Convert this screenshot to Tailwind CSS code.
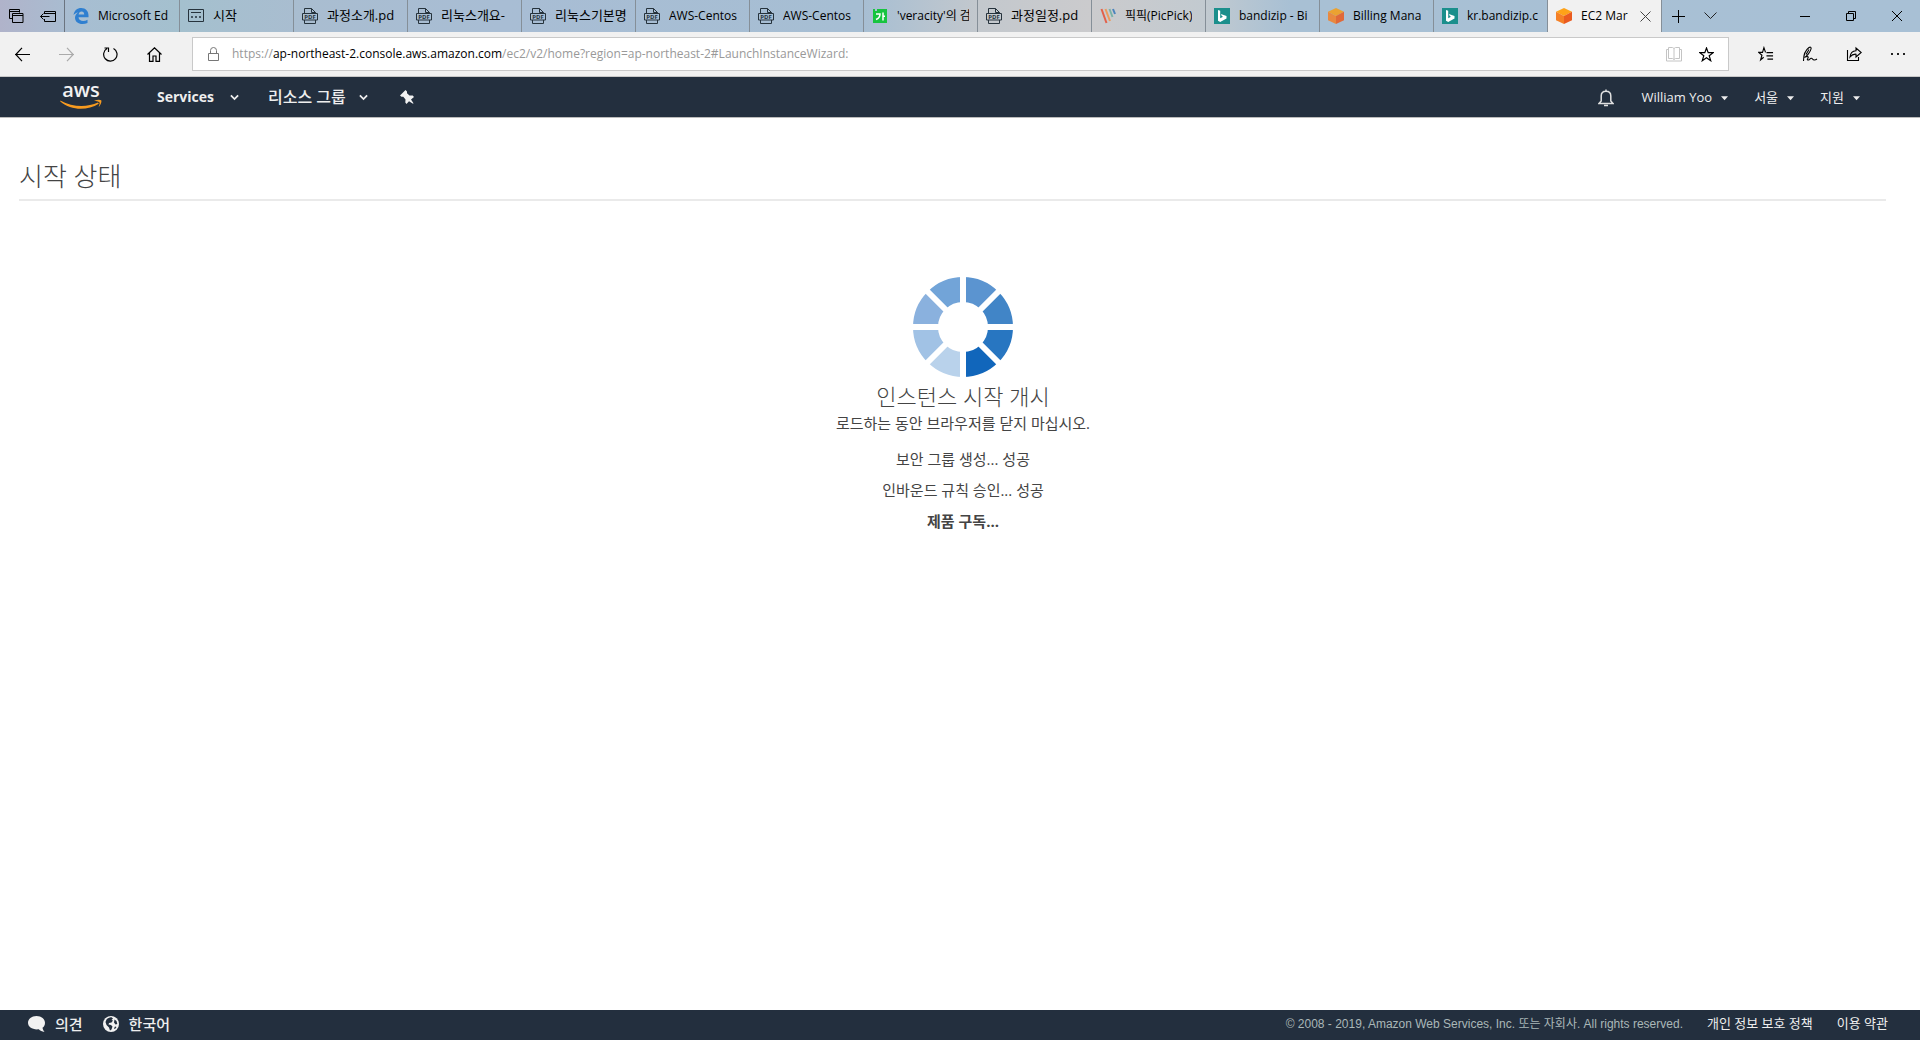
<!DOCTYPE html>
<html lang="ko">
<head>
<meta charset="utf-8">
<title>EC2 Management Console</title>
<script src="https://cdn.jsdelivr.net/npm/@tailwindcss/browser@4"></script>
</head>
<body class="min-h-screen flex flex-col bg-white text-[#444] font-['Open_Sans','Noto_Sans_CJK_KR',sans-serif]">
<svg class="hidden" aria-hidden="true">
  <symbol id="pdf" viewBox="0 0 16 16"><path fill="none" stroke="currentColor" d="M2.500 5V.5h7l4 4V5M9.500.5v4h4M2.500 12v3.500h11V12M.5 5.500h15v6.500H.5z"/><text x="8" y="11" text-anchor="middle" font-size="6" font-weight="700" fill="currentColor">PDF</text></symbol>
  <symbol id="bing" viewBox="0 0 16 16"><path fill="#1b8f8c" d="M0 0h16v16H0z"/><path fill="#fff" d="M4 2l2.200.8v7.400L9 8.700 7.800 8l-.9-2.100L12.500 8v2.500L6.200 14 4 12.800z"/></symbol>
  <symbol id="cube" viewBox="0 0 16 16"><path fill="#f90" fill-opacity=".9" d="M8 0l8 3.800L8 8 0 3.800z"/><path fill="#f58026" d="M0 3.800L8 8v8L0 12.200z"/><path fill="#ea5b1f" d="M16 3.800L8 8v8l8-3.800z"/></symbol>
  <symbol id="caret" viewBox="0 0 8 5"><path fill="currentColor" d="M0 0h8L4 4.500z"/></symbol>
  <symbol id="chev" viewBox="0 0 10 7"><path fill="none" stroke="currentColor" stroke-width="2" d="M1 1.200l4 4 4-4"/></symbol>
</svg>

<header class="text-black">
  <div class="flex h-8 text-[13px] bg-[linear-gradient(90deg,#b0b3ca_0px,#a7bed2_80px,#a4c0ce_180px,#a9bdd0_300px,#a8bdd4_500px,#a6bed3_860px,#c3c8cd_980px,#cbcbcd_1090px,#c2cad0_1205px,#a8c0d4_1290px,#a8c0d5_1920px)]">
    <div class="flex w-[65px] shrink-0 items-center gap-4 pl-[9px] border-r border-[#6b7480]">
      <button aria-label="Tabs set aside"><svg class="size-[15px]" viewBox="0 0 15 15" fill="none" stroke="currentColor"><path d="M3.500 9.500h-3v-9h10v3M.5 2.500h10M3.500 4.500h10.500v9H3.500zM3.500 6.500h10.500"/></svg></button>
      <button aria-label="Set tabs aside"><svg class="w-4 h-[13px]" viewBox="0 0 16 13" fill="none" stroke="currentColor"><path d="M4.500 4V1.500h11v10h-11V9M4.500 3.500h11M.5 6.500h9M3.500 3.500l-3 3 3 3"/></svg></button>
    </div>
    <nav class="flex min-w-0" aria-label="Tabs">
      <a href="#" class="flex w-[115px] items-center gap-[9px] pl-2 pr-2 border-r border-[#858f98] text-xs"><svg class="size-4 shrink-0" viewBox="0 0 16 16"><path fill="#2f7fd0" d="M.5 7C1.200 2.500 4.300 0 8.200 0 12.800 0 15.500 3.300 15.500 7.500V9.300H5.500c.2 2.600 2.300 3.700 4.600 3.700 1.700 0 3.100-.4 4.400-1.200v3.200c-1.500.7-3.200 1-5.100 1C5.200 16 2 13.500 2 9.700c0-2.300 1.200-4.200 3.100-5.300C3.200 4.700 1.500 5.600.5 7zM5.600 6.400h5.600c0-1.800-1-2.900-2.600-2.900S5.900 4.600 5.600 6.400z"/></svg><span class="overflow-hidden whitespace-nowrap">Microsoft Ed</span></a>
      <a href="#" class="flex w-[114px] items-center gap-[9px] pl-2 pr-2 border-r border-[#858f98]"><svg class="size-4 shrink-0" viewBox="0 0 16 16" fill="none" stroke="#26333c"><path d="M.5 1.500h15v12H.5zM3 4.500h10M3.500 8.500h1v1h-1zM7.500 8.500h1v1h-1zM11.500 8.500h1v1h-1z"/></svg><span class="overflow-hidden whitespace-nowrap">시작</span></a>
      <a href="#" class="flex w-[114px] items-center gap-[9px] pl-2 pr-2 border-r border-[#858f98]"><svg class="size-4 shrink-0 text-[#26333c]"><use href="#pdf"/></svg><span class="overflow-hidden whitespace-nowrap">과정소개.pd</span></a>
      <a href="#" class="flex w-[114px] items-center gap-[9px] pl-2 pr-2 border-r border-[#858f98]"><svg class="size-4 shrink-0 text-[#26333c]"><use href="#pdf"/></svg><span class="overflow-hidden whitespace-nowrap">리눅스개요-</span></a>
      <a href="#" class="flex w-[114px] items-center gap-[9px] pl-2 pr-2 border-r border-[#858f98]"><svg class="size-4 shrink-0 text-[#26333c]"><use href="#pdf"/></svg><span class="overflow-hidden whitespace-nowrap">리눅스기본명</span></a>
      <a href="#" class="flex w-[114px] items-center gap-[9px] pl-2 pr-2 border-r border-[#858f98] text-xs"><svg class="size-4 shrink-0 text-[#26333c]"><use href="#pdf"/></svg><span class="overflow-hidden whitespace-nowrap">AWS-Centos</span></a>
      <a href="#" class="flex w-[114px] items-center gap-[9px] pl-2 pr-2 border-r border-[#858f98] text-xs"><svg class="size-4 shrink-0 text-[#26333c]"><use href="#pdf"/></svg><span class="overflow-hidden whitespace-nowrap">AWS-Centos</span></a>
      <a href="#" class="flex w-[114px] items-center gap-[9px] pl-2 pr-2 border-r border-[#858f98] text-xs"><svg class="size-4 shrink-0" viewBox="0 0 16 16"><path fill="#17c43f" d="M1 1h2v2h2V1h10v14H1z"/><path fill="none" stroke="#fff" stroke-width="1.500" d="M4 6h4c0 3-1.500 4.500-4 5.500M11 4.500v8M11 8.300h2"/></svg><span class="overflow-hidden whitespace-nowrap">'veracity'의 검</span></a>
      <a href="#" class="flex w-[114px] items-center gap-[9px] pl-2 pr-2 border-r border-[#858f98]"><svg class="size-4 shrink-0 text-[#26333c]"><use href="#pdf"/></svg><span class="overflow-hidden whitespace-nowrap">과정일정.pd</span></a>
      <a href="#" class="flex w-[114px] items-center gap-[9px] pl-2 pr-2 border-r border-[#858f98] text-xs"><svg class="size-4 shrink-0" viewBox="0 0 16 16" fill="none" stroke-width="2"><path stroke="#e2604a" d="M1.500 1l5 14"/><path stroke="#ec9a5c" d="M5.500 1l4.500 12"/><path stroke="#79b3a8" d="M9.500 1l3 8"/><path stroke="#4b83bd" d="M13 1l2 5"/></svg><span class="overflow-hidden whitespace-nowrap">픽픽(PicPick)</span></a>
      <a href="#" class="flex w-[114px] items-center gap-[9px] pl-2 pr-2 border-r border-[#858f98] text-xs"><svg class="size-4 shrink-0"><use href="#bing"/></svg><span class="overflow-hidden whitespace-nowrap">bandizip - Bi</span></a>
      <a href="#" class="flex w-[114px] items-center gap-[9px] pl-2 pr-2 border-r border-[#858f98] text-xs"><svg class="size-4 shrink-0 opacity-85"><use href="#cube"/></svg><span class="overflow-hidden whitespace-nowrap">Billing Mana</span></a>
      <a href="#" class="flex w-[114px] items-center gap-[9px] pl-2 pr-2 border-r border-[#858f98] text-xs"><svg class="size-4 shrink-0"><use href="#bing"/></svg><span class="overflow-hidden whitespace-nowrap">kr.bandizip.c</span></a>
      <div class="flex w-[114px] items-center justify-between pl-2 pr-2.5 border-r border-[#858f98] bg-[#f1f1f1] text-xs"><a href="#" class="flex min-w-0 items-center gap-[9px]"><svg class="size-4 shrink-0"><use href="#cube"/></svg><span class="overflow-hidden whitespace-nowrap">EC2 Mar</span></a><button class="shrink-0" aria-label="Close tab"><svg class="size-[11px]" viewBox="0 0 11 11" stroke="#444"><path d="M.5.5l10 10M10.500.5l-10 10"/></svg></button></div>
    </nav>
    <div class="flex items-center gap-[19px] pl-2.5">
      <button aria-label="New tab"><svg class="size-[13px]" viewBox="0 0 13 13" stroke="#000"><path d="M6.500 0v13M0 6.500h13"/></svg></button>
      <button aria-label="Tab previews"><svg class="w-[13px] h-2" viewBox="0 0 13 8" fill="none" stroke="#222"><path d="M.5.500l6 6 6-6"/></svg></button>
    </div>
    <div class="ml-auto flex items-center gap-9 pr-[18px]">
      <button aria-label="Minimize"><svg class="size-2.5" viewBox="0 0 10 10" stroke="#000"><path d="M0 5.500h10"/></svg></button>
      <button aria-label="Restore"><svg class="size-2.5" viewBox="0 0 10 10" fill="none" stroke="#000"><path d="M.5 2.500h7v7h-7zM2.500 2.500v-2h7v7h-2"/></svg></button>
      <button aria-label="Close"><svg class="size-2.5" viewBox="0 0 10 10" stroke="#000"><path d="M0 0l10 10M10 0L0 10"/></svg></button>
    </div>
  </div>

  <div class="flex h-[45px] items-center bg-[#f1f1f1] border-b border-[#c8c8c8]">
    <div class="flex w-48 shrink-0 items-center gap-[29px] pl-[15px]">
      <button aria-label="Back"><svg class="size-[15px]" viewBox="0 0 15 15" fill="none" stroke="#000" stroke-width="1.200"><path d="M0 7.500h15M7 .8L.8 7.500 7 14.200"/></svg></button>
      <button aria-label="Forward" disabled><svg class="size-[15px]" viewBox="0 0 15 15" fill="none" stroke="#aaa" stroke-width="1.200"><path d="M0 7.500h15M8 .8l6.200 6.700L8 14.200"/></svg></button>
      <button aria-label="Refresh"><svg class="size-[15px]" viewBox="0 0 15 15" fill="none" stroke="#000" stroke-width="1.200"><path d="M10.500 1.500A6.700 6.700 0 1 1 4 1.600M1.500 1h4v4"/></svg></button>
      <button aria-label="Home"><svg class="size-[15px]" viewBox="0 0 15 15" fill="none" stroke="#000" stroke-width="1.200"><path d="M.5 7.500l7-6.700 7 6.700M2.500 5.800v8.600h3.500V9h3v5.400h3.500V5.800"/></svg></button>
    </div>
    <div class="flex h-[34px] flex-1 items-center bg-white border border-[#c9c9c9] pl-[15px] pr-3.5">
      <svg class="w-[11px] h-[14px] shrink-0" viewBox="0 0 11 14" fill="none" stroke="#777"><path d="M.5 6.500h10v7H.5zM2.500 6.500V3.500a3 3 0 0 1 6 0v3"/></svg>
      <a href="#" class="ml-[13px] flex-1 text-xs text-[#999] whitespace-nowrap">https://<span class="text-black">ap-northeast-2.console.aws.amazon.com</span>/ec2/v2/home?region=ap-northeast-2#LaunchInstanceWizard:</a>
      <button aria-label="Reading view" disabled><svg class="w-4 h-[15px]" viewBox="0 0 16 15" fill="none" stroke="#c4c4c4"><path d="M2.500.5h4L8 1.500 9.500.5h4v11h-4L8 12.500l-1.500-1h-4zM8 1.500v11M2.500 2.500h-2v11.500h15V2.500h-2"/></svg></button>
      <button class="ml-[17px]" aria-label="Add to favorites"><svg class="size-[15px]" viewBox="0 0 15 15" fill="none" stroke="#000" stroke-width="1.200"><path d="M7.500 1l1.700 4.700h5l-4 3 1.500 5-4.200-3-4.200 3 1.500-5-4-3h5z"/></svg></button>
    </div>
    <div class="flex items-center gap-7 pl-[29px] pr-3.5">
      <button aria-label="Hub"><svg class="w-4 h-4" viewBox="0 0 17 16" fill="none" stroke="#000" stroke-width="1.200"><path d="M9 6.500h7M9 10h7M10 13.500h6M8 6.300L6.300 1.300 4.800 6.300H.8l3.400 3-1.400 5L6 11.500"/></svg></button>
      <button aria-label="Make a Web Note"><svg class="w-4 h-4" viewBox="0 0 16 16" fill="none" stroke="#000" stroke-width="1.100"><path d="M1.500 15C1.500 10 3.500 4 7 1.500c1.500-1 2.500 0 2 1.500C8.300 6 5 10 2.500 11.500M4 8.500l3-5M4.500 11C6 10 7 11 5.500 13c-.5 1 .5 1.500 2 .5 1-1 2-2 3-.5.800 1.200 2.500 1.500 4.500 0"/></svg></button>
      <button aria-label="Share"><svg class="w-4 h-4" viewBox="0 0 16 16" fill="none" stroke="#000" stroke-width="1.100"><path d="M1.500 4v10.500h11V11M4 11c.5-4.500 3-6 6-6.200V2l5.200 4.500L10 11V8.200C7.500 8 5.500 9 4 11z"/></svg></button>
      <button aria-label="Settings and more"><svg class="w-4 h-4" viewBox="0 0 16 16" fill="#222"><path d="M1 7h2v2H1zM7 7h2v2H7zM13 7h2v2h-2z"/></svg></button>
    </div>
  </div>

  <nav class="flex h-[41px] items-center bg-[#232f3e] border-b border-[#bbb] text-[#eee]" aria-label="AWS">
    <a href="#" class="ml-[60px]" aria-label="AWS"><svg class="w-[42px] h-[26px]" viewBox="0 0 42 26"><text x="21" y="13" text-anchor="middle" font-size="20" font-weight="600" fill="#f2f2f2">aws</text><path fill="#f79b20" d="M.3 16.500C13 23.500 27 23.500 38 18.500l.8 1.200C27 27 11 26.500.3 17.500zM34 16.800c3-1.300 6-1.500 7.200-.6.800 1.500-.6 5.300-2.700 7 .8-2 1.500-4 .9-5-.8-.8-3.400-.9-5.400-1.400z"/></svg></a>
    <button class="ml-[55px] flex items-center gap-4 text-sm font-bold">Services<svg class="w-[9px] h-[7px]"><use href="#chev"/></svg></button>
    <button class="ml-[29px] flex items-center gap-[13px] text-base font-medium">리소스 그룹<svg class="w-[9px] h-[7px]"><use href="#chev"/></svg></button>
    <button class="ml-8" aria-label="Pin shortcuts"><svg class="size-3.5" viewBox="0 0 14 14" fill="#f2f2f2"><path d="M1 4.500L5.500 0 7 1.500v1.800l2.500 2.200h3.200L14 7l-3 2.500 2.500 3.700-.5.500L9 11.300 6.500 14 5.300 12.500l.2-3L3.300 6.800H1.500L0 5.500z"/></svg></button>
    <div class="ml-auto mr-[60px] flex items-center pt-0.5 text-[13px]">
      <button aria-label="Notifications"><svg class="w-4 h-[18px]" viewBox="0 0 16 18" fill="none" stroke="#e0e0e0" stroke-width="1.500"><path d="M8 .5V2M1 14.500h14L12.800 12V7C12.800 4 10.800 2.200 8 2.200S3.200 4 3.200 7v5zM6 16.500h4"/></svg></button>
      <button class="ml-[27px] flex items-center gap-[9px]">William Yoo<svg class="w-[7px] h-[5px]"><use href="#caret"/></svg></button>
      <button class="ml-[26px] flex items-center gap-[9px]">서울<svg class="w-[7px] h-[5px]"><use href="#caret"/></svg></button>
      <button class="ml-[26px] flex items-center gap-[9px]">지원<svg class="w-[7px] h-[5px]"><use href="#caret"/></svg></button>
    </div>
  </nav>
</header>

<main class="flex-1">
  <h1 class="ml-[19px] mr-[34px] mt-10 h-[43px] border-b-2 border-[#eaeaea] text-[26px] leading-9 font-light">시작 상태</h1>
  <section class="flex flex-col items-center pt-[76px] pl-1.5 text-[15px] leading-5" aria-live="polite">
    <svg class="size-[100px]" viewBox="-50 -50 100 100" role="img" aria-label="Loading">
      <circle r="37.500" fill="none" stroke-width="25" stroke="#5b94d0" pathLength="8" stroke-dasharray="1 7" transform="rotate(-90)"/>
      <circle r="37.500" fill="none" stroke-width="25" stroke="#4185c7" pathLength="8" stroke-dasharray="1 7" transform="rotate(-45)"/>
      <circle r="37.500" fill="none" stroke-width="25" stroke="#2876c1" pathLength="8" stroke-dasharray="1 7"/>
      <circle r="37.500" fill="none" stroke-width="25" stroke="#1166bb" pathLength="8" stroke-dasharray="1 7" transform="rotate(45)"/>
      <circle r="37.500" fill="none" stroke-width="25" stroke="#b9d2eb" pathLength="8" stroke-dasharray="1 7" transform="rotate(90)"/>
      <circle r="37.500" fill="none" stroke-width="25" stroke="#a1c2e5" pathLength="8" stroke-dasharray="1 7" transform="rotate(135)"/>
      <circle r="37.500" fill="none" stroke-width="25" stroke="#8ab1de" pathLength="8" stroke-dasharray="1 7" transform="rotate(180)"/>
      <circle r="37.500" fill="none" stroke-width="25" stroke="#72a4d8" pathLength="8" stroke-dasharray="1 7" transform="rotate(225)"/>
      <path stroke="#fff" stroke-width="6" d="M0-51V51M-51 0H51M-37-37L37 37M37-37L-37 37"/>
    </svg>
    <h2 class="mt-1 mb-0.5 text-[22px] leading-[30px] font-light">인스턴스 시작 개시</h2>
    <p>로드하는 동안 브라우저를 닫지 마십시오.</p>
    <p class="mt-4">보안 그룹 생성... 성공</p>
    <p class="mt-[11px]">인바운드 규칙 승인... 성공</p>
    <p class="mt-[11px] font-bold">제품 구독...</p>
  </section>
</main>

<footer class="flex h-[30px] items-center bg-[#232f3e] pb-0.5 pl-7 pr-8 text-[#eee]">
  <a href="#" class="flex items-center gap-2.5 text-[15px] font-medium"><svg class="w-[17px] h-4" viewBox="0 0 17 16" fill="#f2f2f2"><path d="M8.500 0C13.500 0 17 3 17 6.800c0 2.500-1 4-2.500 5 .2 1.500 1 3 2 4.200-2.500-.3-4.500-1.300-5.700-2.700C4.500 14 0 11 0 6.800 0 3 3.500 0 8.500 0z"/></svg>의견</a>
  <button class="ml-5 flex items-center gap-2.5 text-[15px] font-medium"><svg class="size-4" viewBox="0 0 16 16"><circle cx="8" cy="8" r="8" fill="#f2f2f2"/><path fill="#232f3e" d="M3.500 3.500C5 2 7 1 8.500 1.300L10 2.500 8.500 4l1.500.5L8.500 6.500 6 7 5.500 8.500 8 9l1.500 1.500-1 3L7 14.500 6 11.500 3.500 9 2.500 6zM11.500 3.500l2 1.500.8 3-1.800.5-1.500-2zM12 10.500l1.500.5-1.500 2-1-.5z"/></svg>한국어</button>
  <p class="ml-auto font-['Liberation_Sans','Noto_Sans_CJK_KR',sans-serif] text-xs text-[#aab7b8]">© 2008 - 2019, Amazon Web Services, Inc. 또는 자회사. All rights reserved.</p>
  <a href="#" class="ml-6 text-[13px]">개인 정보 보호 정책</a>
  <a href="#" class="ml-6 text-[13px]">이용 약관</a>
</footer>
</body>
</html>
